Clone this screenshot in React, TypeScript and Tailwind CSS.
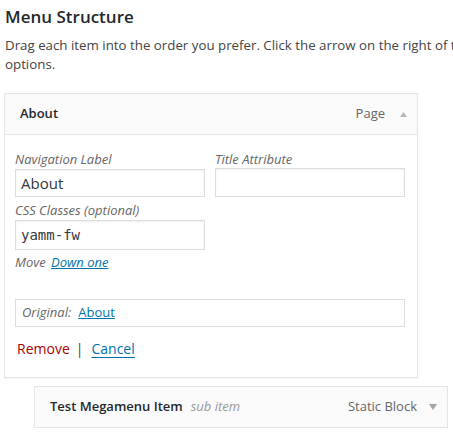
import React from 'react';

const Arrow: React.FC<{ up?: boolean }> = ({ up }) =>
  up ? (
    <svg width="7" height="5" viewBox="0 0 7 5" className="ml-[15px]">
      <path d="M3.5 0 L7 5 L0 5 Z" fill="#b4b9be" />
    </svg>
  ) : (
    <svg width="8" height="6" viewBox="0 0 8 6" className="ml-[12px]">
      <path d="M0 0 L8 0 L4 6 Z" fill="#a0a5aa" />
    </svg>
  );

const inputCls = 'border border-[#ddd] shadow-[inset_0_1px_2px_rgba(0,0,0,0.07)] bg-white';

const App: React.FC = () => {
  return (
    <div className="w-[453px] h-[436px] overflow-hidden bg-white text-[#444] font-['Open_Sans',_'Liberation_Sans',_sans-serif]">
      <h3 className="pl-[5px] pt-[5px] text-[17px] leading-[24px] font-semibold text-[#23282d]">Menu Structure</h3>
      <p className="w-[730px] pl-[5px] mt-[7px] text-[13.3px] leading-[19px]">
        Drag each item into the order you prefer. Click the arrow on the right of the item to reveal additional configuration options.
      </p>

      <div className="ml-[4px] mt-[19px] w-[414px] border border-[#e5e5e5] bg-white shadow-[0_1px_1px_rgba(0,0,0,0.04)]">
        <div className="h-[41px] flex items-center justify-between pl-[15px] pr-[10px] bg-[#fafafa] border-b border-[#e5e5e5]">
          <span className="text-[13px] font-semibold text-[#23282d]">About</span>
          <div className="flex items-center">
            <span className="text-[13px] text-[#666]">Page</span>
            <Arrow up />
          </div>
        </div>
        <div className="px-[10px] pt-[15px] pb-[18px] text-[13px]">
          <div className="flex gap-[10px]">
            <label className="block w-[190px]">
              <span className="block italic text-[#666] leading-[19px]">Navigation Label</span>
              <div className={`h-[28px] px-[5px] flex items-center text-[15px] text-[#32373c] ${inputCls}`}>About</div>
            </label>
            <label className="block w-[190px]">
              <span className="block italic text-[#666] leading-[19px]">Title Attribute</span>
              <div className={`h-[29px] -mt-[1px] ${inputCls}`}></div>
            </label>
          </div>
          <label className="block w-[190px] mt-[4px]">
            <span className="block italic text-[#666] leading-[19px]">CSS Classes (optional)</span>
            <div className={`h-[30px] px-[5px] flex items-center text-[14px] text-[#32373c] font-['DejaVu_Sans_Mono',_monospace] ${inputCls}`}>yamm-fw</div>
          </label>
          <div className="mt-[3px] leading-[19px] italic text-[#666]">
            Move <a className="ml-[2px] text-[#0073aa] underline">Down one</a>
          </div>
          <div className="mt-[27px] w-[390px] h-[28px] border border-[#ddd] px-[6px] flex items-center">
            <span className="italic text-[#666]">Original:</span>
            <a className="ml-[7px] text-[#0073aa] underline">About</a>
          </div>
          <div className="mt-[12px] flex items-center text-[14px] leading-[20px] pl-[2px]">
            <a className="text-[#a00]">Remove</a>
            <span className="mx-[6px] text-[#444]">|</span>
            <a className="text-[#0073aa] underline underline-offset-[3px] px-[2px]">Cancel</a>
          </div>
        </div>
      </div>

      <div className="ml-[34px] mt-[8px] w-[414px] h-[42px] border border-[#e5e5e5] bg-[#fafafa] flex items-center justify-between pl-[15px] pr-[10px]">
        <div className="flex items-center">
          <span className="text-[13px] font-semibold text-[#23282d]">Test Megamenu Item</span>
          <span className="ml-[8px] text-[13px] italic text-[#999]">sub item</span>
        </div>
        <div className="flex items-center">
          <span className="text-[13px] text-[#666]">Static Block</span>
          <Arrow />
        </div>
      </div>
    </div>
  );
};

export default App;
